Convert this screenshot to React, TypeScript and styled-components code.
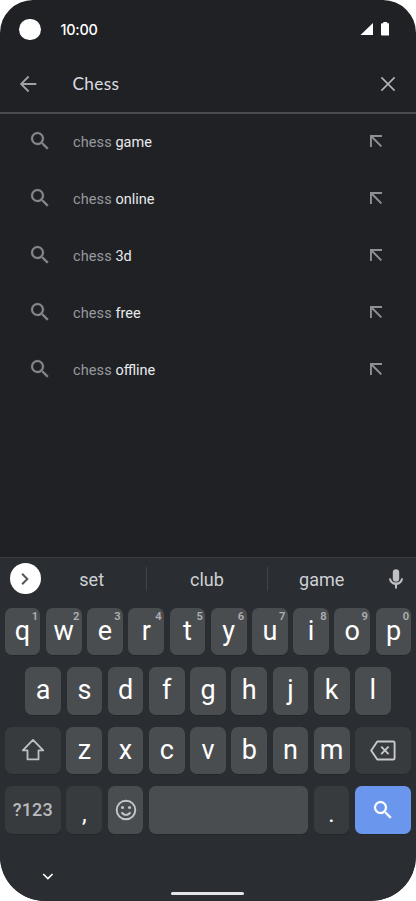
import React from "react";
import styled, { createGlobalStyle } from "styled-components";

const GlobalStyle = createGlobalStyle`
  * { box-sizing: border-box; }
  html, body { margin: 0; padding: 0; background: #fff; }
  body { font-family: Roboto, "Liberation Sans", sans-serif; overflow: hidden; }
  button { font: inherit; border: 0; padding: 0; margin: 0; background: none; color: inherit; }
  svg { display: block; flex: none; }
`;

const Phone = styled.main`
  width: 416px;
  height: 901px;
  display: flex;
  flex-direction: column;
  overflow: hidden;
  background: #202124;
  border-radius: 33px 33px 45px 45px;
`;

const StatusBar = styled.header`
  height: 56px;
  flex: none;
  display: flex;
  align-items: center;
  padding: 3px 27px 0 19px;
`;

const Camera = styled.span`
  width: 21.5px;
  height: 21.5px;
  border-radius: 50%;
  background: #fff;
`;

const Clock = styled.time`
  margin-left: 20px;
  flex: 1;
  font: 500 14.4px/20px Inter, sans-serif;
  letter-spacing: -0.25px;
  color: #fff;
`;

const StatusIcons = styled.div`
  display: flex;
  align-items: center;
  gap: 7.5px;
  margin-top: -1px;
`;

const SearchBar = styled.div`
  height: 58px;
  flex: none;
  display: flex;
  align-items: center;
  padding: 0 16.5px 0 16.3px;
  border-bottom: 2px solid #4b4c50;
`;

const Query = styled.div`
  flex: 1;
  margin-left: 32.2px;
  font: 400 17.3px/24px Lato, sans-serif;
  letter-spacing: 0.3px;
  color: #dcdde0;
`;

const IconButton = styled.button`
  display: flex;
  align-items: center;
  justify-content: center;
  width: 24px;
  height: 24px;
`;

const Suggestions = styled.ul`
  list-style: none;
  margin: 0;
  padding: 0;
  height: 443px;
  flex: none;
`;

const Suggestion = styled.li`
  height: 57px;
  display: flex;
  align-items: center;
  padding: 0 34px 3px 28.4px;
`;

const SuggestionText = styled.span`
  flex: 1;
  margin-left: 20.6px;
  padding-top: 3px;
  font-size: 14.5px;
  line-height: 20px;
  letter-spacing: 0.1px;
  color: #97999c;
`;

const Completion = styled.span`
  color: #e8eaed;
  letter-spacing: normal;
`;

const Keyboard = styled.section`
  flex: 1;
  display: flex;
  flex-direction: column;
  background: #2a2d32;
  border-top: 1px solid #3a3c41;
`;

const PredictionBar = styled.div`
  height: 49.5px;
  flex: none;
  display: flex;
  align-items: center;
  padding: 0 8px 7.5px 9.7px;
`;

const ExpandButton = styled.button`
  width: 31px;
  height: 31px;
  margin-top: -1px;
  border-radius: 50%;
  background: #fff;
  display: flex;
  align-items: center;
  justify-content: center;
`;

const Prediction = styled.span<{ $width: number; $divided?: boolean; $shift?: number }>`
  width: ${(p) => p.$width}px;
  height: 24px;
  padding-right: ${(p) => p.$shift ?? 0}px;
  border-right: ${(p) => (p.$divided ? "1px solid #404348" : "0")};
  text-align: center;
  font-size: 18px;
  line-height: 25px;
  color: #cfd1d4;
`;

const MicSlot = styled.span`
  margin-left: auto;
  margin-top: -1px;
`;

const KeyRows = styled.div`
  display: flex;
  flex-direction: column;
  gap: 12px;
  padding: 0 4.7px;
`;

const KeyRow = styled.div<{ $inset?: boolean }>`
  display: flex;
  gap: 5.5px;
  height: 47.5px;
  padding: 0 ${(p) => (p.$inset ? 20.6 : 0)}px;
`;

type Tone = "letter" | "dark" | "accent";
const tones: Record<Tone, string> = {
  letter: "#4a4d50",
  dark: "#383b3e",
  accent: "#6b96ee",
};

const Key = styled.button<{ $tone?: Tone; $width?: number }>`
  position: relative;
  flex: ${(p) => (p.$width ? `0 0 ${p.$width}px` : "1 1 0")};
  height: 47.5px;
  display: flex;
  align-items: center;
  justify-content: center;
  border-radius: 6.5px;
  background: ${(p) => tones[p.$tone ?? "letter"]};
  box-shadow: 0 0.5px 0.5px #1f2125;
  color: #fff;
  font-size: 27px;
  line-height: 32px;
`;

const Glyph = styled.span<{ $low?: boolean }>`
  padding: ${(p) => (p.$low ? "9px 0 0" : "0 0 1px")};
  font-size: ${(p) => (p.$low ? 24 : 27)}px;
`;

const ModeLabel = styled.span`
  font-size: 18px;
  font-weight: 500;
  letter-spacing: 0.2px;
  color: #b9bbbe;
  padding-top: 1px;
`;

const Hint = styled.sup`
  position: absolute;
  top: 3px;
  right: 2.3px;
  font-size: 11.2px;
  line-height: 12px;
  font-weight: 600;
  color: #aeb0b3;
`;

const NavigationBar = styled.footer`
  flex: 1;
  display: grid;
  grid-template-columns: 1fr 73px 1fr;
  padding: 36.5px 1px 0 0;
`;

const HideButton = styled.button`
  justify-self: start;
  align-self: start;
  margin-left: 42px;
`;

const HomeHandle = styled.span`
  height: 2.5px;
  margin-top: 22px;
  border-radius: 2px;
  background: #e4e5e8;
`;

const SearchIcon = ({ color }: { color: string }) => (
  <svg width="24" height="24" viewBox="0 0 24 24" fill={color} stroke={color} strokeWidth="0.25">
    <path d="M15.5 14h-.79l-.28-.27A6.47 6.47 0 0 0 16 9.5 6.5 6.5 0 1 0 9.5 16c1.61 0 3.09-.59 4.23-1.57l.27.28v.79l5 4.99L20.49 19l-4.99-5zm-6 0C7.01 14 5 11.99 5 9.5S7.01 5 9.5 5 14 7.01 14 9.5 11.99 14 9.5 14z" />
  </svg>
);

const BackIcon = () => (
  <svg width="24" height="24" viewBox="0 0 24 24" fill="none" stroke="#a0a2a5" strokeWidth="1.8">
    <path d="M20.3 12H5.4M12.6 4.5 5.1 12l7.5 7.5" />
  </svg>
);

const CloseIcon = () => (
  <svg width="24" height="24" viewBox="0 0 24 24" fill="none" stroke="#b0b2b5" strokeWidth="1.7">
    <path d="m5.4 5.4 13.2 13.2M18.6 5.4 5.4 18.6" />
  </svg>
);

const InsertIcon = () => (
  <svg width="12" height="12" viewBox="0 0 12 12" fill="none" stroke="#8e9094" strokeWidth="1.9">
    <path d="M12 .95H.95V12M1 1l10.4 10.4" />
  </svg>
);

const SignalIcon = () => (
  <svg width="13" height="12.5" viewBox="0 0 13 12.5" fill="#fff">
    <path d="M13 0v12.5H0z" />
  </svg>
);

const BatteryIcon = () => (
  <svg width="8.5" height="13.5" viewBox="0 0 8.5 13.5" fill="#fff">
    <path d="M2.3 0h3.9v1.2h1.3a1 1 0 0 1 1 1v10.3a1 1 0 0 1-1 1H1a1 1 0 0 1-1-1V2.2a1 1 0 0 1 1-1h1.3z" />
  </svg>
);

const ExpandIcon = () => (
  <svg width="12" height="14" viewBox="0 0 12 14" fill="none" stroke="#55575a" strokeWidth="2">
    <path d="m3.1 1.8 5.2 5.2-5.2 5.2" />
  </svg>
);

const MicIcon = () => (
  <svg width="24" height="24" viewBox="0 0 24 24" fill="#bfc1c4">
    <rect x="8.8" y="2.3" width="6.4" height="12.5" rx="3.2" />
    <path d="M17.2 11.3a5.3 5.3 0 0 1-10.4 0H5a7 7 0 0 0 6 6.8v3.4h2v-3.4a7 7 0 0 0 6-6.8z" />
  </svg>
);

const ShiftIcon = () => (
  <svg width="24" height="24" viewBox="0 0 24 24" fill="none" stroke="#bec0c3" strokeWidth="1.8" strokeLinejoin="round">
    <path d="M12 1.9 1.8 12.4h4.7v9h11v-9h4.7z" />
  </svg>
);

const BackspaceIcon = () => (
  <svg width="26" height="22" viewBox="0 0 26 22" fill="none" stroke="#c6c8ca" strokeWidth="1.9" strokeLinejoin="round">
    <path d="M7.3 2.5h16a1.3 1.3 0 0 1 1.3 1.3v15.4a1.3 1.3 0 0 1-1.3 1.3h-16L1.2 11.5z" />
    <path d="m11.2 7.7 7.4 7.4m0-7.4-7.4 7.4" />
  </svg>
);

const EmojiIcon = () => (
  <svg width="22" height="22" viewBox="0 0 22 22" fill="none" stroke="#c4c6c8" strokeWidth="1.9">
    <circle cx="11" cy="11" r="9.3" />
    <path d="M6.6 13.2a5 5 0 0 0 8.8 0" />
    <circle cx="7.5" cy="8.6" r="1.5" fill="#c4c6c8" stroke="none" />
    <circle cx="14.5" cy="8.6" r="1.5" fill="#c4c6c8" stroke="none" />
  </svg>
);

const ChevronDownIcon = () => (
  <svg width="12" height="12" viewBox="0 0 12 12" fill="none" stroke="#fff" strokeWidth="1.6">
    <path d="m1.2 4 4.7 4.6L10.6 4" />
  </svg>
);

const completions = ["game", "online", "3d", "free", "offline"];

export default function App() {
  return (
    <>
      <GlobalStyle />
      <Phone>
        <StatusBar>
          <Camera />
          <Clock>10:00</Clock>
          <StatusIcons>
            <SignalIcon />
            <BatteryIcon />
          </StatusIcons>
        </StatusBar>
        <SearchBar>
          <IconButton aria-label="Back"><BackIcon /></IconButton>
          <Query>Chess</Query>
          <IconButton aria-label="Clear"><CloseIcon /></IconButton>
        </SearchBar>
        <Suggestions>
          {completions.map((word) => (
            <Suggestion key={word}>
              <SearchIcon color="#85878a" />
              <SuggestionText>chess <Completion>{word}</Completion></SuggestionText>
              <InsertIcon />
            </Suggestion>
          ))}
        </Suggestions>
        <Keyboard>
          <PredictionBar>
            <ExpandButton aria-label="Expand"><ExpandIcon /></ExpandButton>
            <Prediction $width={106} $shift={3} $divided>set</Prediction>
            <Prediction $width={121.5} $divided>club</Prediction>
            <Prediction $width={107}>game</Prediction>
            <MicSlot><MicIcon /></MicSlot>
          </PredictionBar>
          <KeyRows>
            <KeyRow>
              {"qwertyuiop".split("").map((letter, i) => (
                <Key key={letter}>
                  <Glyph>{letter}</Glyph>
                  <Hint>{(i + 1) % 10}</Hint>
                </Key>
              ))}
            </KeyRow>
            <KeyRow $inset>
              {"asdfghjkl".split("").map((letter) => (
                <Key key={letter}><Glyph>{letter}</Glyph></Key>
              ))}
            </KeyRow>
            <KeyRow>
              <Key $tone="dark" $width={56.3} aria-label="Shift"><ShiftIcon /></Key>
              {"zxcvbnm".split("").map((letter) => (
                <Key key={letter}><Glyph>{letter}</Glyph></Key>
              ))}
              <Key $tone="dark" $width={56.3} aria-label="Backspace"><BackspaceIcon /></Key>
            </KeyRow>
            <KeyRow>
              <Key $tone="dark" $width={56.3}><ModeLabel>?123</ModeLabel></Key>
              <Key $tone="dark" $width={35.7}><Glyph $low>,</Glyph></Key>
              <Key $width={35.7} aria-label="Emoji"><EmojiIcon /></Key>
              <Key aria-label="Space" />
              <Key $tone="dark" $width={35.7}><Glyph $low>.</Glyph></Key>
              <Key $tone="accent" $width={56.6} aria-label="Search"><SearchIcon color="#fff" /></Key>
            </KeyRow>
          </KeyRows>
          <NavigationBar>
            <HideButton aria-label="Hide keyboard"><ChevronDownIcon /></HideButton>
            <HomeHandle />
          </NavigationBar>
        </Keyboard>
      </Phone>
    </>
  );
}
